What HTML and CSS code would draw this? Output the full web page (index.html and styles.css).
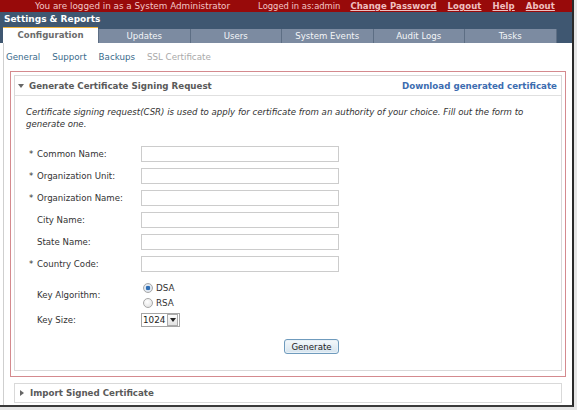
FILE: index.html
```html
<!DOCTYPE html>
<html>
<head>
<meta charset="utf-8">
<link rel="stylesheet" href="styles.css">
</head>
<body>
<div class="frame">
  <div class="topbar">
    <span class="who">You are logged in as a System Administrator</span>
    <span class="user">Logged in as:admin</span>
    <a class="toplink">Change Password</a>
    <a class="toplink">Logout</a>
    <a class="toplink">Help</a>
    <a class="toplink">About</a>
  </div>
  <div class="titlebar">Settings &amp; Reports</div>
  <div class="tabbar">
    <div class="tab active">Configuration</div>
    <div class="tab">Updates</div>
    <div class="tab">Users</div>
    <div class="tab">System Events</div>
    <div class="tab">Audit Logs</div>
    <div class="tab last">Tasks</div>
  </div>
  <div class="content">
    <div class="subnav">
      <a class="sublink">General</a>
      <a class="sublink">Support</a>
      <a class="sublink">Backups</a>
      <a class="sublink current">SSL Certificate</a>
    </div>
    <div class="highlight">
      <div class="panel">
        <div class="panel-head">
          <span class="tri down"></span>
          <span class="panel-title">Generate Certificate Signing Request</span>
          <a class="download">Download generated certificate</a>
        </div>
        <div class="panel-body">
          <p class="desc">Certificate signing request(CSR) is used to apply for certificate from an authority of your choice. Fill out the form to generate one.</p>
          <div class="form">
            <div class="row"><label class="lbl"><span class="req">*</span>Common Name:</label><input class="field" type="text"></div>
            <div class="row"><label class="lbl"><span class="req">*</span>Organization Unit:</label><input class="field" type="text"></div>
            <div class="row"><label class="lbl"><span class="req">*</span>Organization Name:</label><input class="field" type="text"></div>
            <div class="row"><label class="lbl"><span class="req"></span>City Name:</label><input class="field" type="text"></div>
            <div class="row"><label class="lbl"><span class="req"></span>State Name:</label><input class="field" type="text"></div>
            <div class="row"><label class="lbl"><span class="req">*</span>Country Code:</label><input class="field" type="text"></div>
            <div class="row alg"><label class="lbl"><span class="req"></span>Key Algorithm:</label>
              <div class="radios">
                <div class="radio-opt"><span class="radio checked"></span>DSA</div>
                <div class="radio-opt"><span class="radio"></span>RSA</div>
              </div>
            </div>
            <div class="row size"><label class="lbl"><span class="req"></span>Key Size:</label>
              <div class="select"><span class="sel-val">1024</span><span class="sel-btn"><svg width="6" height="4" viewBox="0 0 6 4"><path d="M0 0H6L3 4Z" fill="#222"/></svg></span></div>
            </div>
            <div class="row btnrow"><button class="btn">Generate</button></div>
          </div>
        </div>
      </div>
    </div>
    <div class="panel collapsed">
      <div class="panel-head nob">
        <span class="tri right"></span>
        <span class="panel-title">Import Signed Certificate</span>
      </div>
    </div>
  </div>
</div>
</body>
</html>
```
FILE: styles.css
```css
html, body {
  margin: 0;
  padding: 0;
}
body {
  width: 577px;
  height: 410px;
  background: #e6e6e6;
  font-family: "DejaVu Sans", Verdana, sans-serif;
  font-size: 8.6px;
  overflow: hidden;
}
.frame {
  width: 572px;
  height: 405px;
  background: #fff;
  border-right: 2px solid #2a2a2a;
  border-bottom: 2px solid #3a3a3a;
  display: flex;
  flex-direction: column;
  overflow: hidden;
}
.topbar {
  height: 12px;
  background: #980a0a;
  color: #f3c6c6;
  display: flex;
  align-items: center;
  padding-left: 35px;
  font-size: 8.8px;
  white-space: nowrap;
}
.who { margin-right: 28px; }
.user { margin-right: 10px; font-size: 8.4px; }
.toplink {
  font-weight: bold;
  text-decoration: underline;
  margin-right: 11px;
  color: #f0c0c0;
  font-size: 8.5px;
  letter-spacing: 0.1px;
}
.titlebar {
  height: 15px;
  background: #3f5771;
  color: #fff;
  font-weight: bold;
  font-size: 9px;
  line-height: 15px;
  padding-left: 4px;
}
.tabbar {
  height: 16px;
  background: #3f5771;
  display: flex;
  align-items: flex-end;
  padding-left: 3px;
}
.tab {
  width: 90.5px;
  height: 14px;
  background: #7c8ba1;
  color: #f4f6f8;
  border-left: 1px solid #5d6e84;
  text-align: center;
  line-height: 14px;
  font-size: 8.6px;
}
.tab.active {
  width: 95px;
  height: 15px;
  background: #fff;
  color: #6b6b6b;
  font-weight: bold;
  border-left: none;
  border-top: 1px solid #f0b33a;
  line-height: 15px;
  font-size: 8.6px;
}
.tab.last { border-right: 1px solid #5d6e84; }
.content {
  flex: 1;
  margin-left: 3px;
  border-left: 1px solid #cfcfcf;
  padding-top: 7px;
}
.subnav {
  height: 13px;
  display: flex;
  align-items: center;
  padding-left: 2px;
  margin-bottom: 8px;
}
.sublink {
  color: #3a6b8c;
  margin-right: 12px;
  font-size: 8.7px;
}
.sublink.current { color: #a9a9a9; }
.highlight {
  margin-left: 6px;
  width: 548px;
  height: 298px;
  border: 1px solid #d48a8e;
  padding: 3px;
}
.panel {
  border: 1px solid #d9d9d9;
  height: 296px;
  box-sizing: border-box;
  width: 548px;
}
.panel-head {
  height: 20px;
  border-bottom: 1px solid #e0e0e0;
  display: flex;
  align-items: center;
  padding-left: 3px;
  padding-right: 4px;
  box-sizing: border-box;
}
.panel-head.nob { border-bottom: none; height: 18px; }
.tri {
  width: 0;
  height: 0;
  margin-right: 5px;
}
.tri.down {
  border-left: 3.5px solid transparent;
  border-right: 3.5px solid transparent;
  border-top: 4px solid #666;
  margin-left: 0;
}
.tri.right {
  border-top: 3.5px solid transparent;
  border-bottom: 3.5px solid transparent;
  border-left: 4px solid #666;
  margin-left: 2px;
  margin-right: 6px;
}
.panel-title {
  font-weight: bold;
  color: #5a5a5a;
  font-size: 8.7px;
  flex: 1;
}
.download {
  font-weight: bold;
  color: #3c6cb0;
  font-size: 8.7px;
}
.panel-body {
  padding: 10px 14px 0 11px;
}
.desc {
  margin: 0;
  font-style: italic;
  color: #333;
  line-height: 12px;
  font-size: 8.6px;
}
.form {
  margin-top: 16px;
  padding-left: 3px;
}
.row {
  display: flex;
  align-items: center;
  height: 16px;
  margin-bottom: 6px;
}
.lbl {
  width: 112px;
  color: #333;
  display: flex;
  font-size: 8.6px;
}
.req {
  width: 8px;
  display: inline-block;
}
.field {
  width: 198px;
  height: 16px;
  box-sizing: border-box;
  border: 1px solid #cccccc;
  margin: 0;
  padding: 0;
  background: #fff;
}
.row.alg {
  height: 30px;
  margin-top: 8px;
  margin-bottom: 3px;
}
.radios {
  display: flex;
  flex-direction: column;
  padding-left: 2px;
}
.radio-opt {
  height: 15px;
  display: flex;
  align-items: center;
  font-size: 8.8px;
  color: #333;
}
.radio {
  width: 8px;
  height: 8px;
  border-radius: 50%;
  border: 1px solid #a8a8a8;
  background: radial-gradient(circle at 40% 35%, #fff, #ddd);
  margin-right: 3px;
  box-sizing: content-box;
}
.radio.checked {
  background: radial-gradient(circle, #2f6fb5 0, #2f6fb5 2px, #e8eef5 2.6px, #cfd8e2 100%);
}
.row.size {
  height: 14px;
  margin-bottom: 12px;
}
.select {
  display: flex;
  height: 14px;
  border: 1px solid #a5a5a5;
  box-sizing: border-box;
  align-items: center;
  font-size: 8.8px;
  color: #222;
}
.sel-val {
  padding: 0 2px 0 1px;
}
.sel-btn {
  width: 9px;
  height: 10px;
  border: 1px solid #aaa;
  background: linear-gradient(#fcfcfc, #e2e2e2);
  display: flex;
  align-items: center;
  justify-content: center;
  margin-right: 1px;
}
.btnrow {
  justify-content: flex-end;
  width: 310px;
  height: 15px;
}
.btn {
  width: 55px;
  height: 15px;
  padding: 0;
  font-family: "DejaVu Sans", Verdana, sans-serif;
  font-size: 8.6px;
  color: #222;
  border: 1px solid #6f9bbd;
  border-radius: 3px;
  background: linear-gradient(#f4f8fb, #d6e4ee);
  box-shadow: inset 0 0 0 1px #e9f1f7;
}
.panel.collapsed {
  margin-top: 6px;
  margin-left: 10px;
  height: 20px;
  width: 548px;
}
```
